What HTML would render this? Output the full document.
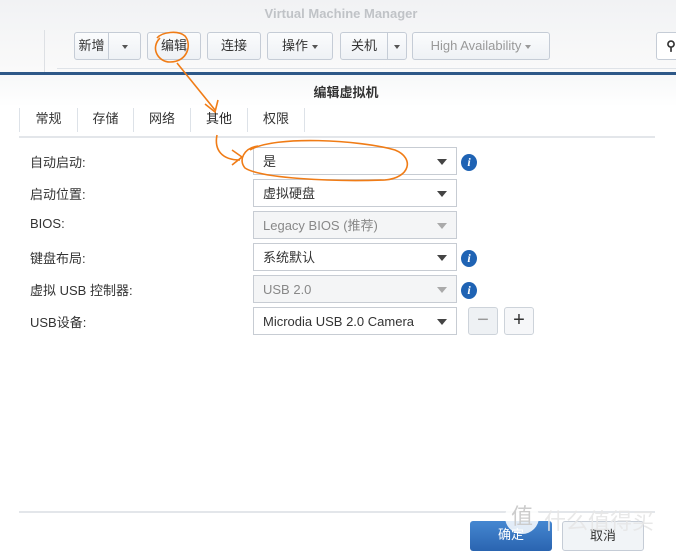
<!DOCTYPE html>
<html><head><meta charset="utf-8"><style>
*{margin:0;padding:0;box-sizing:border-box}
body{width:676px;height:546px;overflow:hidden;background:#fff;font-family:"Liberation Sans","Noto Sans CJK SC",sans-serif;font-size:13px;color:#333;position:relative}
.abs{position:absolute}
.top{left:0;top:0;width:676px;height:72px;background:linear-gradient(#f1f2f4,#fafafa)}
.btn{position:absolute;top:32px;height:28px;border:1px solid #c5ccd6;border-radius:3px;background:linear-gradient(#fbfcfd,#eef1f5);font-size:13px;color:#333;line-height:26px;text-align:center}
.caret{display:inline-block;width:0;height:0;border-left:3.5px solid transparent;border-right:3.5px solid transparent;border-top:4px solid #555;vertical-align:middle;margin-left:4px}
.lbl{position:absolute;left:30px;font-size:13px;color:#333}
.sel{position:absolute;left:253px;width:204px;height:28px;border:1px solid #c7ccd3;background:#fff;padding-left:9px;line-height:28px;font-size:13px}
.sel.dis{background:#f4f5f6;color:#888}
.sel::after{content:"";position:absolute;right:9px;top:11px;border-left:5px solid transparent;border-right:5px solid transparent;border-top:6px solid #444}
.sel.dis::after{border-top-color:#aaa}
.info{position:absolute;left:461px;width:16px;height:17px;border-radius:50%;background:#1f63b4;color:#fff;font:italic bold 12px "Liberation Serif",serif;text-align:center;line-height:17px}
.tab{position:absolute;top:108px;height:24px;line-height:22px;font-size:13px;color:#333;border-right:1px solid #dde2e8;text-align:center}
</style></head><body>
<div class="abs top"></div>
<div class="abs" style="left:0;top:6px;width:676px;text-align:center;font-weight:bold;font-size:13px;color:#c0c3c7;padding-left:6px">Virtual Machine Manager</div>
<div class="abs" style="left:44px;top:30px;width:1px;height:42px;background:#dde0e4"></div>
<div class="abs" style="left:57px;top:68px;width:619px;height:1px;background:#dfe3e8"></div>
<div class="btn" style="left:74px;width:35px;border-radius:3px 0 0 3px">新增</div>
<div class="btn" style="left:108px;width:33px;border-radius:0 3px 3px 0"><span class="caret" style="margin:0"></span></div>
<div class="btn" style="left:147px;width:54px">编辑</div>
<div class="btn" style="left:207px;width:54px">连接</div>
<div class="btn" style="left:267px;width:66px">操作<span class="caret"></span></div>
<div class="btn" style="left:340px;width:48px;border-radius:3px 0 0 3px">关机</div>
<div class="btn" style="left:387px;width:20px;border-radius:0 3px 3px 0"><span class="caret" style="margin:0"></span></div>
<div class="btn" style="left:412px;width:138px;color:#999">High Availability<span class="caret" style="border-top-color:#999"></span></div>
<div class="btn" style="left:656px;width:30px;background:#fff;font-weight:bold">⚲</div>
<div class="abs" style="left:0;top:72px;width:676px;height:3px;background:#2e5888"></div>
<div class="abs" style="left:0;top:75px;width:676px;height:32px;background:linear-gradient(#f7f8f9,#fff)"></div>
<div class="abs" style="left:0;top:82px;width:676px;text-align:center;font-weight:bold;font-size:13px;color:#333;padding-left:16px">编辑虚拟机</div>
<div class="abs" style="left:19px;top:108px;width:1px;height:24px;background:#dde2e8"></div>
<div class="tab" style="left:20px;width:58px">常规</div>
<div class="tab" style="left:78px;width:56px">存储</div>
<div class="tab" style="left:134px;width:57px">网络</div>
<div class="tab" style="left:191px;width:57px;color:#222">其他</div>
<div class="tab" style="left:248px;width:57px">权限</div>
<div class="abs" style="left:19px;top:136px;width:636px;height:2px;background:#e3e6ea"></div>

<div class="lbl" style="top:152px">自动启动:</div><div class="sel" style="top:147px">是</div><div class="info" style="top:154px">i</div>
<div class="lbl" style="top:184px">启动位置:</div><div class="sel" style="top:179px">虚拟硬盘</div>
<div class="lbl" style="top:216px">BIOS:</div><div class="sel dis" style="top:211px">Legacy BIOS (推荐)</div>
<div class="lbl" style="top:248px">键盘布局:</div><div class="sel" style="top:243px">系统默认</div><div class="info" style="top:250px">i</div>
<div class="lbl" style="top:280px">虚拟 USB 控制器:</div><div class="sel dis" style="top:275px">USB 2.0</div><div class="info" style="top:282px">i</div>
<div class="lbl" style="top:312px">USB设备:</div><div class="sel" style="top:307px">Microdia USB 2.0 Camera</div>
<div class="abs" style="left:468px;top:307px;width:30px;height:28px;border:1px solid #cdd3da;border-radius:3px;background:#eef1f4;color:#999;text-align:center;line-height:25px;font-size:20px">−</div>
<div class="abs" style="left:504px;top:307px;width:30px;height:28px;border:1px solid #cdd3da;border-radius:3px;background:#f6f7f9;color:#333;text-align:center;line-height:25px;font-size:20px">+</div>

<div class="abs" style="left:19px;top:511px;width:636px;height:2px;background:#e3e6ea"></div>
<div class="abs" style="left:470px;top:521px;width:82px;height:30px;border-radius:3px;background:linear-gradient(#4587d1,#2a64b0);color:#fff;text-align:center;line-height:28px">确定</div>
<div class="abs" style="left:562px;top:521px;width:82px;height:30px;border:1px solid #c5ccd6;border-radius:3px;background:#f1f4f7;text-align:center;line-height:28px">取消</div>
<div class="abs" style="left:505px;top:500px;width:34px;height:34px;border-radius:50%;background:rgba(255,255,255,.85);color:#ccc;text-align:center;line-height:34px;font-size:22px">值</div>
<div class="abs" style="left:544px;top:504px;font-size:22px;color:rgba(230,230,230,.9)">什么值得买</div>

<svg class="abs" style="left:0;top:0" width="676" height="546">
<g fill="none" stroke="#f07c16" stroke-width="1.6">
<path d="M160 38 C150 48,158 62,170 62 C188 62,192 44,185 36 C178 30,162 32,157 38"/>
<path d="M177 63 L215 110"/>
<path d="M205 104 L215 112 L218 100"/>
<path d="M217 135 C214 150,222 160,240 160"/>
<path d="M232 150 L242 157 L232 165"/>
<path d="M250 150 C275 135,360 140,395 150 C415 158,410 178,385 180 C330 182,260 178,245 168 C238 160,244 148,258 146"/>
</g></svg>
</body></html>
